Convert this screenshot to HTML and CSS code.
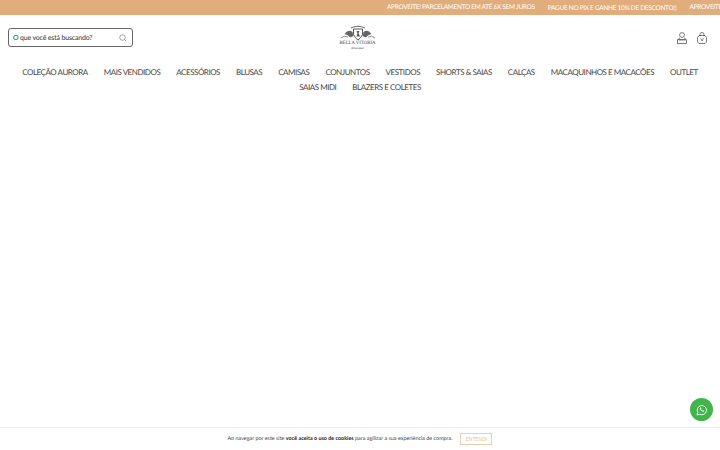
FILE: index.html
```html
<!DOCTYPE html>
<html lang="pt-BR">
<head>
  <meta charset="UTF-8">
  <meta name="viewport" content="width=device-width, initial-scale=1.0">
  <title>Bella Vitoria</title>
  <link rel="stylesheet" href="styles.css">
</head>
<body>
  <div class="topbar">
    <span>APROVEITE! PARCELAMENTO EM ATÉ 6X SEM JUROS</span>
    <span>PAGUE NO PIX E GANHE 10% DE DESCONTO▯</span>
    <span>APROVEITE! PARCELAMENTO EM ATÉ 6X SEM JUROS</span>
  </div>

  <header class="header">
    <form class="search">
      <span class="search-text">O que você está buscando?</span>
      <svg class="search-icon" viewBox="0 0 10 10" width="8" height="8">
        <circle cx="4.4" cy="4.4" r="3.5" fill="none" stroke="#666" stroke-width="0.7"/>
        <path d="M7 7l2.2 2.2" stroke="#666" stroke-width="0.7"/>
      </svg>
    </form>

    <a class="logo" href="#">
      <svg viewBox="0 0 36 16" width="36" height="16">
        <path d="M11 3q7-3.500 14 0" fill="none" stroke="#666" stroke-width="1"/>
        <path d="M13.500 4h9v5.500q-1.500 3.500-4.500 5.500q-3-2-4.500-5.500z" fill="#fff" stroke="#444" stroke-width="0.9"/>
        <path d="M16.500 6l3 0l-1 2l1.500 3.500h-3.500l1-3z" fill="#555"/>
        <path d="M12.500 7q-4-3.500-8 2q4 1 5 3q2 .5 4-1z" fill="#666"/>
        <path d="M23.500 7q4-3.500 8 2q-4 1-5 3q-2 .5-4-1z" fill="#666"/>
        <path d="M1 13q3-3 7-1M35 13q-3-3-7-1" fill="none" stroke="#777" stroke-width="0.8"/>
      </svg>
      <span class="logo-name">BELLA VITORIA</span>
      <span class="logo-sub">Boutique</span>
    </a>

    <div class="header-icons">
      <svg viewBox="0 0 10 12" width="10" height="12">
        <circle cx="5" cy="3" r="2.400" fill="none" stroke="#444" stroke-width="0.7"/>
        <path d="M3 5.600c-1 .5-1.200 1.200-1.200 2.200h6.400c0-1-.2-1.700-1.200-2.200" fill="none" stroke="#444" stroke-width="0.7"/>
        <rect x="0.500" y="7.800" width="9" height="3.700" fill="none" stroke="#444" stroke-width="0.7"/>
      </svg>
      <svg viewBox="0 0 10 12" width="10" height="12">
        <path d="M2 3.500h6l1.500 2v4.500l-1.500 1.500h-6l-1.500-1.500v-4.500z" fill="none" stroke="#444" stroke-width="0.7"/>
        <path d="M3 4v-1.500a2 2 0 0 1 4 0v1.500" fill="none" stroke="#444" stroke-width="0.7"/>
        <path d="M3.500 6l1.500 3l1.500-3" fill="none" stroke="#444" stroke-width="0.6"/>
      </svg>
    </div>
  </header>

  <nav class="menu">
    <a href="#">COLEÇÃO AURORA</a>
    <a href="#">MAIS VENDIDOS</a>
    <a href="#">ACESSÓRIOS</a>
    <a href="#">BLUSAS</a>
    <a href="#">CAMISAS</a>
    <a href="#">CONJUNTOS</a>
    <a href="#">VESTIDOS</a>
    <a href="#">SHORTS &amp; SAIAS</a>
    <a href="#">CALÇAS</a>
    <a href="#">MACAQUINHOS E MACACÕES</a>
    <a href="#">OUTLET</a>
    <a href="#">SAIAS MIDI</a>
    <a href="#">BLAZERS E COLETES</a>
  </nav>

  <a class="whatsapp" href="#">
    <svg viewBox="0 0 14 14" width="12" height="12">
      <path d="M1.200 12.800l.9-3.100a5.400 5.400 0 1 1 2.200 2.200z" fill="none" stroke="#fff" stroke-width="1.100"/>
      <path d="M5 4c-.8.6-.7 1.800.3 3.100s2.400 2.300 3.400 2c.7-.2.900-.8.800-1.200l-1.200-.6-.6.6c-.7-.2-1.500-1-1.800-1.800l.5-.6-.6-1.300z" fill="#fff"/>
    </svg>
  </a>

  <div class="cookies">
    <p>Ao navegar por este site <strong>você aceita o uso de cookies</strong> para agilizar a sua experiência de compra.</p>
    <button class="cookies-btn">ENTENDI</button>
  </div>
</body>
</html>
```

FILE: styles.css
```css
body {
  margin: 0;
  background: #fff;
  color: #333;
  font-family: 'Lato', sans-serif;
  text-rendering: geometricPrecision;
  height: 450px;
  overflow: hidden;
}

.topbar {
  display: flex;
  gap: 13px;
  height: 15px;
  align-items: center;
  padding-left: 387px;
  background: #e2ad7c;
  color: #fff;
  font-size: 6.500px;
  letter-spacing: -0.3px;
  white-space: nowrap;
  overflow: hidden;
}

.header {
  display: grid;
  grid-template-columns: 1fr auto 1fr;
  align-items: center;
  padding: 10px 13px 0 8px;
}

.search {
  display: flex;
  justify-content: space-between;
  align-items: center;
  box-sizing: border-box;
  width: 125px;
  height: 19px;
  padding: 0 5px 0 4px;
  border: 1px solid #666;
  border-radius: 3px;
}

.search-text {
  font-size: 7px;
  letter-spacing: -0.18px;
  color: #333;
}

.logo {
  display: flex;
  flex-direction: column;
  align-items: center;
  width: 36px;
  color: #444;
  text-decoration: none;
  font-family: 'Liberation Serif', serif;
}

.logo-name {
  font-size: 4.800px;
  line-height: 6px;
  white-space: nowrap;
}

.logo-sub {
  font-size: 3.500px;
  line-height: 3px;
  font-style: italic;
}

.header-icons {
  display: flex;
  justify-content: flex-end;
  gap: 10px;
  align-items: center;
}

.menu {
  display: flex;
  flex-wrap: wrap;
  justify-content: center;
  gap: 0 16px;
  margin-top: 15px;
  padding: 0 10px;
}

.menu a {
  font-size: 8px;
  letter-spacing: -0.46px;
  line-height: 15px;
  color: #444;
  text-decoration: none;
}

.whatsapp {
  position: fixed;
  right: 7px;
  bottom: 29px;
  display: flex;
  align-items: center;
  justify-content: center;
  width: 23px;
  height: 23px;
  border-radius: 50%;
  background: #3fb54a;
}

.cookies {
  position: fixed;
  left: 0;
  right: 0;
  bottom: 0;
  display: flex;
  justify-content: center;
  align-items: center;
  gap: 8px;
  height: 22px;
  background: #fff;
  border-top: 1px solid #eee;
  font-size: 5.400px;
  color: #444;
}

.cookies p {
  margin: 0;
}

.cookies strong {
  color: #222;
}

.cookies-btn {
  width: 32px;
  height: 12px;
  padding: 0;
  background: #fff;
  border: 1px solid #e8cdb2;
  color: #e2c3a3;
  font-family: inherit;
  font-size: 5px;
}
```
